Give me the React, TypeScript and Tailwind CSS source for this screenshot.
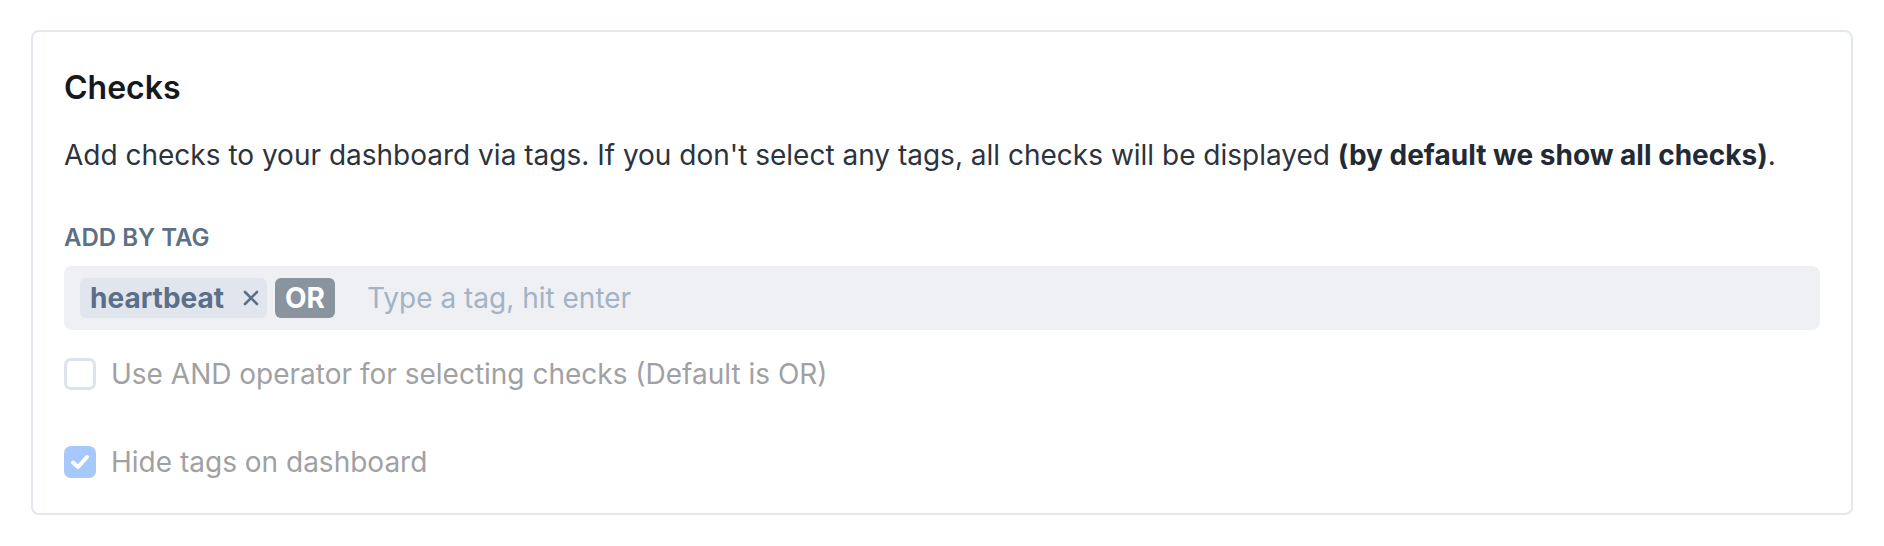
import React from "react";

export default function App() {
  return (
    <div
      className="w-[1884px] h-[546px] bg-white pt-[30px] pl-[31px]"
      style={{ fontFamily: "Inter, 'Noto Sans', sans-serif" }}
    >
      <div className="w-[1822px] h-[485px] rounded-[8px] border-2 border-[#e3e7ee] px-[31px] pt-[36px]">
        <h2 className="text-[32px] leading-[40px] font-semibold text-[#15191e]">Checks</h2>
        <p className="mt-[26px] text-[28px] leading-[42px] text-[#2c333d]">
          Add checks to your dashboard via tags. If you don't select any tags, all checks will be displayed{" "}
          <span className="font-bold text-[#222a35]">(by default we show all checks)</span>.
        </p>
        <div className="mt-[47px] text-[24px] leading-[30px] font-semibold uppercase text-[#5d7086]">Add by tag</div>
        <div className="mt-[13px] h-[64px] rounded-[8px] bg-[#eef0f4] pl-[16px] flex items-center">
          <div className="h-[40px] rounded-[6px] bg-[#e1e6ee] pl-[10px] pr-[8px] flex items-center">
            <span className="text-[28px] leading-[40px] font-bold text-[#5b6f88]">heartbeat</span>
            <svg className="ml-[19px]" width="16" height="16" viewBox="0 0 16 16">
              <path d="M2 2 L14 14 M14 2 L2 14" stroke="#5b6f88" strokeWidth="2.6" strokeLinecap="round" />
            </svg>
          </div>
          <div className="ml-[8px] h-[40px] w-[60px] rounded-[6px] bg-[#8a949f] flex items-center justify-center">
            <span className="text-[28px] leading-[40px] font-bold text-white">OR</span>
          </div>
          <span className="ml-[32px] text-[28px] leading-[40px] text-[#a3b3c4]">Type a tag, hit enter</span>
        </div>
        <label className="mt-[26px] flex items-center">
          <span className="w-[32px] h-[32px] rounded-[7px] border-[3px] border-[#dce3ea] bg-white" />
          <span className="ml-[15px] text-[28px] leading-[36px] text-[#a0a1a3]">
            Use AND operator for selecting checks (Default is OR)
          </span>
        </label>
        <label className="mt-[52px] flex items-center">
          <span className="w-[32px] h-[32px] rounded-[7px] bg-[#a7c8fb] flex items-center justify-center">
            <svg width="24" height="24" viewBox="0 0 24 24">
              <path d="M5 12.5 L10 17 L19 7" fill="none" stroke="white" strokeWidth="4" strokeLinecap="round" strokeLinejoin="round" />
            </svg>
          </span>
          <span className="ml-[15px] text-[28px] leading-[36px] text-[#a0a1a3]">Hide tags on dashboard</span>
        </label>
      </div>
    </div>
  );
}
